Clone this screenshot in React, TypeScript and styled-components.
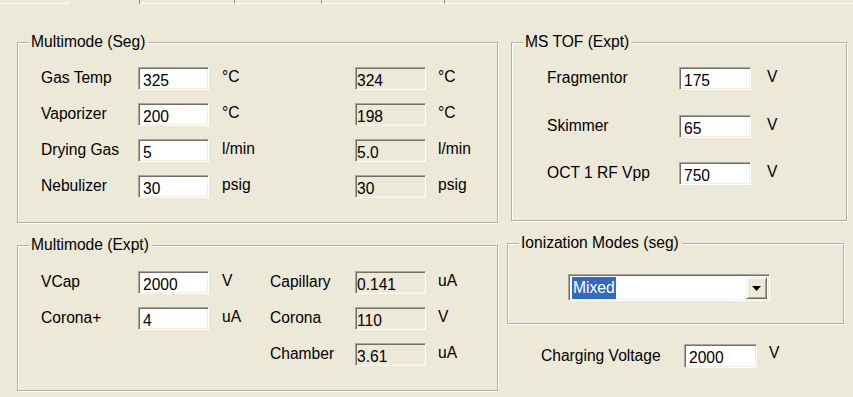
import styled, { createGlobalStyle } from "styled-components";

const GlobalStyle = createGlobalStyle`
  html, body {
    margin: 0;
    padding: 0;
    background: #ece9d8;
  }
  body {
    font-family: "Liberation Sans", Arial, sans-serif;
    font-size: 15.6px;
    color: #000;
  }
`;

type Row = {
  label: string;
  value: string;
  unit: string;
  label2?: string;
  readout: string;
  unit2: string;
};

const segRows: Row[] = [
  { label: "Gas Temp", value: "325", unit: "°C", readout: "324", unit2: "°C" },
  { label: "Vaporizer", value: "200", unit: "°C", readout: "198", unit2: "°C" },
  { label: "Drying Gas", value: "5", unit: "l/min", readout: "5.0", unit2: "l/min" },
  { label: "Nebulizer", value: "30", unit: "psig", readout: "30", unit2: "psig" },
];

const exptRows: Row[] = [
  { label: "VCap", value: "2000", unit: "V", label2: "Capillary", readout: "0.141", unit2: "uA" },
  { label: "Corona+", value: "4", unit: "uA", label2: "Corona", readout: "110", unit2: "V" },
  { label: "", value: "", unit: "", label2: "Chamber", readout: "3.61", unit2: "uA" },
];

const tofRows = [
  { label: "Fragmentor", value: "175", unit: "V" },
  { label: "Skimmer", value: "65", unit: "V" },
  { label: "OCT 1 RF Vpp", value: "750", unit: "V" },
];

const tabs = [
  { width: 67, selected: false },
  { width: 73, selected: true },
  { width: 95, selected: false },
  { width: 87, selected: false },
  { width: 123, selected: false },
];

function App() {
  return (
    <>
      <GlobalStyle />
      <Window>
        <TabStrip>
          {tabs.map((tab, i) => (
            <TabStub key={i} $width={tab.width} $selected={tab.selected} $first={i === 0} />
          ))}
          <TabRest />
        </TabStrip>
        <Panel>
          <LeftColumn>
            <Group $width={481} $height={181}>
              <GroupTitle>Multimode (Seg)</GroupTitle>
              <FieldGrid $top={24}>
                {segRows.map((row) => (
                  <>
                    <Label key={row.label}>{row.label}</Label>
                    <TextBox>{row.value}</TextBox>
                    <Unit>{row.unit}</Unit>
                    <Label />
                    <TextBox $readonly>{row.readout}</TextBox>
                    <Unit>{row.unit2}</Unit>
                  </>
                ))}
              </FieldGrid>
            </Group>
            <Group $width={481} $height={146}>
              <GroupTitle>Multimode (Expt)</GroupTitle>
              <FieldGrid $top={25}>
                {exptRows.map((row) => (
                  <>
                    <Label key={row.label2}>{row.label}</Label>
                    {row.value ? <TextBox>{row.value}</TextBox> : <Label />}
                    <Unit>{row.unit}</Unit>
                    <Label>{row.label2}</Label>
                    <TextBox $readonly>{row.readout}</TextBox>
                    <Unit>{row.unit2}</Unit>
                  </>
                ))}
              </FieldGrid>
            </Group>
          </LeftColumn>
          <RightColumn>
            <Group $width={336} $height={179} $offset={4}>
              <GroupTitle>MS TOF (Expt)</GroupTitle>
              <TofGrid>
                {tofRows.map((row) => (
                  <>
                    <Label key={row.label}>{row.label}</Label>
                    <TextBox $width={72}>{row.value}</TextBox>
                    <TofUnit>{row.unit}</TofUnit>
                  </>
                ))}
              </TofGrid>
            </Group>
            <Group $width={337} $height={81} $top={22}>
              <GroupTitle>Ionization Modes (seg)</GroupTitle>
              <ComboWrap>
                <ComboBox>
                  <ComboText>
                    <Selected>Mixed</Selected>
                  </ComboText>
                  <DropButton>
                    <svg width="9" height="5" viewBox="0 0 9 5">
                      <polygon points="0,0 9,0 4.5,5" fill="#000" />
                    </svg>
                  </DropButton>
                </ComboBox>
              </ComboWrap>
            </Group>
            <ChargingRow>
              <ChargingLabel>Charging Voltage</ChargingLabel>
              <TextBox $width={73} $height={24}>2000</TextBox>
              <ChargingUnit>V</ChargingUnit>
            </ChargingRow>
          </RightColumn>
        </Panel>
      </Window>
    </>
  );
}

const Window = styled.div`
  width: 853px;
  height: 397px;
  overflow: hidden;
  background: #ece9d8;
`;

const TabStrip = styled.div`
  display: flex;
  height: 4px;
`;

type TabProps = {
  $width: number;
  $selected: boolean;
  $first: boolean;
};

const TabStub = styled.div<TabProps>`
  box-sizing: border-box;
  width: ${(p) => p.$width}px;
  height: 4px;
  border-bottom: ${(p) => (p.$selected ? "none" : "1px solid #fff")};
  border-left: ${(p) => (p.$selected ? "1px solid #fff" : "none")};
  border-right: ${(p) => (p.$first ? "none" : "1px solid #8a877a")};
  background: #ece9d8;
`;

const TabRest = styled.div`
  flex: 1;
  height: 4px;
  box-sizing: border-box;
  border-bottom: 1px solid #fff;
`;

const Panel = styled.div`
  display: flex;
  column-gap: 9px;
  padding: 38px 0 0 17px;
`;

const LeftColumn = styled.div`
  display: flex;
  flex-direction: column;
  row-gap: 22px;
`;

const RightColumn = styled.div`
  display: flex;
  flex-direction: column;
`;

type GroupProps = {
  $width: number;
  $height: number;
  $offset?: number;
  $top?: number;
};

const Group = styled.div<GroupProps>`
  position: relative;
  box-sizing: border-box;
  width: ${(p) => p.$width}px;
  height: ${(p) => p.$height}px;
  margin-left: ${(p) => p.$offset ?? 0}px;
  margin-top: ${(p) => p.$top ?? 0}px;
  border: 1px solid #b2b0a1;
  box-shadow: inset 1px 1px 0 #fff, 1px 1px 0 #fff;
`;

const GroupTitle = styled.span`
  position: absolute;
  top: -10px;
  left: 11px;
  padding: 0 3px 0 2px;
  line-height: 18px;
  background: #ece9d8;
  white-space: nowrap;
`;

const FieldGrid = styled.div<{ $top: number }>`
  display: grid;
  grid-template-columns: 97px 71px 61px 85px 70px auto;
  grid-auto-rows: 23px;
  row-gap: 13px;
  padding: ${(p) => p.$top}px 0 0 23px;
`;

const Label = styled.div`
  line-height: 21px;
  white-space: nowrap;
`;

const Unit = styled.div`
  line-height: 20px;
  padding-left: 13px;
  white-space: nowrap;
`;

type BoxProps = {
  $readonly?: boolean;
  $width?: number;
  $height?: number;
};

const TextBox = styled.div<BoxProps>`
  box-sizing: border-box;
  width: ${(p) => p.$width ?? 71}px;
  height: ${(p) => p.$height ?? 23}px;
  padding: ${(p) => (p.$readonly ? "4px 0 0 1px" : "4px 0 0 4px")};
  line-height: 17px;
  overflow: hidden;
  white-space: nowrap;
  background: ${(p) => (p.$readonly ? "#ece9d8" : "#fff")};
  color: #000;
  border: 1px solid;
  border-color: #aca899 #fff #fff #aca899;
  box-shadow: inset 1px 1px 0 #716f64, inset -1px -1px 0 #f1efe2;
`;

const TofGrid = styled.div`
  display: grid;
  grid-template-columns: 132px 72px auto;
  grid-auto-rows: 23px;
  row-gap: 24.5px;
  padding: 24px 0 0 35px;
`;

const TofUnit = styled.div`
  line-height: 20px;
  padding-left: 16px;
`;

const ComboWrap = styled.div`
  padding: 30px 0 0 60px;
`;

const ComboBox = styled.div`
  box-sizing: border-box;
  display: flex;
  width: 202px;
  height: 27px;
  padding: 2px 2px 1px 3px;
  background: #fff;
  border: 1px solid;
  border-color: #aca899 #fff #fff #aca899;
  box-shadow: inset 1px 1px 0 #716f64, inset -1px -1px 0 #f1efe2;
`;

const ComboText = styled.div`
  flex: 1;
  display: flex;
`;

const Selected = styled.span`
  display: flex;
  align-items: flex-end;
  padding: 0 1px 3px 1px;
  background: #316ac5;
  color: #fff;
  line-height: 17px;
`;

const DropButton = styled.div`
  box-sizing: border-box;
  width: 21px;
  height: 22px;
  display: flex;
  align-items: center;
  justify-content: center;
  padding-top: 1px;
  background: #ece9d8;
  border: 1px solid;
  border-color: #f1efe2 #716f64 #716f64 #f1efe2;
  box-shadow: inset 1px 1px 0 #fff, inset -1px -1px 0 #aca899;
`;

const ChargingRow = styled.div`
  display: flex;
  align-items: flex-start;
  margin: 20px 0 0 34px;
`;

const ChargingLabel = styled.div`
  width: 143px;
  line-height: 22px;
  padding-top: 1px;
`;

const ChargingUnit = styled.div`
  padding-left: 12px;
  line-height: 18px;
`;

export default App;
